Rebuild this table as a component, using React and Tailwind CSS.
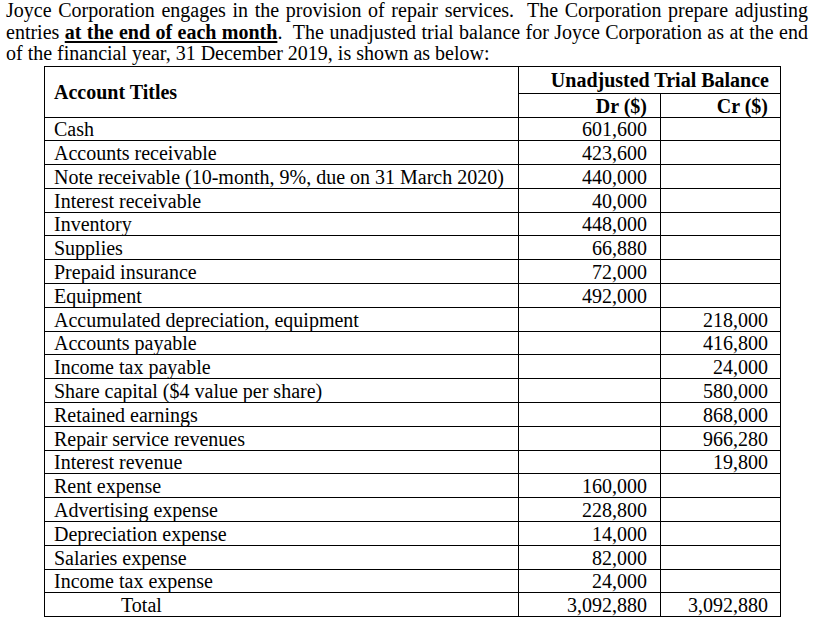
import React from 'react';

const rows = [
  { title: 'Cash', dr: '601,600' },
  { title: 'Accounts receivable', dr: '423,600' },
  { title: 'Note receivable (10-month, 9%, due on 31 March 2020)', dr: '440,000' },
  { title: 'Interest receivable', dr: '40,000' },
  { title: 'Inventory', dr: '448,000' },
  { title: 'Supplies', dr: '66,880' },
  { title: 'Prepaid insurance', dr: '72,000' },
  { title: 'Equipment', dr: '492,000' },
  { title: 'Accumulated depreciation, equipment', cr: '218,000' },
  { title: 'Accounts payable', cr: '416,800' },
  { title: 'Income tax payable', cr: '24,000' },
  { title: 'Share capital ($4 value per share)', cr: '580,000' },
  { title: 'Retained earnings', cr: '868,000' },
  { title: 'Repair service revenues', cr: '966,280' },
  { title: 'Interest revenue', cr: '19,800' },
  { title: 'Rent expense', dr: '160,000' },
  { title: 'Advertising expense', dr: '228,800' },
  { title: 'Depreciation expense', dr: '14,000' },
  { title: 'Salaries expense', dr: '82,000' },
  { title: 'Income tax expense', dr: '24,000' },
];

const cell = 'border border-black h-[23.8px] p-0 leading-[21px] align-bottom text-[20px]';

export default function App() {
  return (
    <div className="w-[814px] h-[623px] bg-white text-black overflow-hidden font-['Liberation_Serif',serif]">
      <div className="px-[6px] text-[20px] leading-[21.5px]">
        <div className="text-justify [text-align-last:justify]">
          Joyce Corporation engages in the provision of repair services.&nbsp; The Corporation prepare adjusting
        </div>
        <div className="text-justify [text-align-last:justify]">
          entries <span className="font-bold underline underline-offset-2">at the end of each month</span>.&nbsp; The unadjusted trial balance for Joyce Corporation as at the end
        </div>
        <div>of the financial year, 31 December 2019, is shown as below:</div>
      </div>

      <table className="ml-[44px] mt-px border-collapse table-fixed w-[736px]">
        <colgroup>
          <col className="w-[474px]" />
          <col className="w-[142px]" />
          <col className="w-[120px]" />
        </colgroup>
        <thead>
          <tr>
            <th rowSpan={2} className="border border-black p-0 pl-[9px] text-left align-middle text-[20px] leading-[22px] font-bold">
              Account Titles
            </th>
            <th colSpan={2} className="border border-black h-[27px] p-0 pr-[11px] text-right text-[20px] leading-[22px] font-bold">
              Unadjusted Trial Balance
            </th>
          </tr>
          <tr>
            <th className="border border-black h-[24px] p-0 pr-[13px] text-right text-[20px] font-bold leading-[21px] align-bottom">Dr ($)</th>
            <th className="border border-black h-[24px] p-0 pr-[12px] text-right text-[20px] font-bold leading-[21px] align-bottom">Cr ($)</th>
          </tr>
        </thead>
        <tbody>
          {rows.map((r) => (
            <tr key={r.title}>
              <td className={`${cell} pl-[9px]`}>{r.title}</td>
              <td className={`${cell} pr-[13px] text-right`}>{r.dr || ''}</td>
              <td className={`${cell} pr-[12px] text-right`}>{r.cr || ''}</td>
            </tr>
          ))}
          <tr>
            <td className={`${cell} pl-[76px]`}>Total</td>
            <td className={`${cell} pr-[13px] text-right`}>3,092,880</td>
            <td className={`${cell} pr-[12px] text-right`}>3,092,880</td>
          </tr>
        </tbody>
      </table>
    </div>
  );
}
